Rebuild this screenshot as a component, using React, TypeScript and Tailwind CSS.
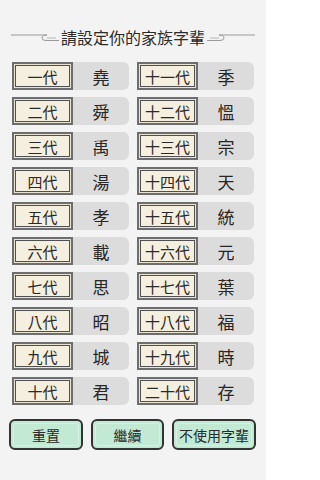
const rows: [string, string, string, string][] = [
  ['一代', '堯', '十一代', '季'],
  ['二代', '舜', '十二代', '慍'],
  ['三代', '禹', '十三代', '宗'],
  ['四代', '湯', '十四代', '天'],
  ['五代', '孝', '十五代', '統'],
  ['六代', '載', '十六代', '元'],
  ['七代', '思', '十七代', '葉'],
  ['八代', '昭', '十八代', '福'],
  ['九代', '城', '十九代', '時'],
  ['十代', '君', '二十代', '存'],
];

function Scroll({ flip }: { flip?: boolean }) {
  return (
    <svg width="48" height="10" viewBox="0 0 48 10" className={flip ? '-scale-x-100' : ''}>
      <path d="M0 3 H36 Q31 3 31 6 Q31 8.5 35 8.5 H48" fill="none" stroke="#9a9a9a" strokeWidth="1" />
      <path d="M36 6 H45" fill="none" stroke="#b5b5b5" strokeWidth="1" />
    </svg>
  );
}

function Entry({ gen, name }: { gen: string; name: string }) {
  return (
    <div className="flex h-[28px]">
      <div className="w-[61px] border-2 border-[#6e6e6e] bg-[#e9e3d4] p-[1px]">
        <div className="flex h-full items-center justify-center border-[1.5px] border-[#505050] bg-[#f5efdf] text-[15px] text-[#2a2a2a] leading-none">
          {gen}
        </div>
      </div>
      <div className="flex flex-1 items-center justify-center rounded-r-[6px] bg-[#dcdcdc] text-[17px] text-[#262626] leading-none">
        {name}
      </div>
    </div>
  );
}

function Button({ label, w }: { label: string; w: string }) {
  return (
    <button className={`${w} h-[31px] rounded-[6px] border-2 border-[#333] bg-[#c2e9d4] p-[2px]`}>
      <div className="flex h-full items-center justify-center rounded-[3px] border border-[#d6f1e3] text-[14px] text-[#2a2a2a] leading-none">
        {label}
      </div>
    </button>
  );
}

export default function App() {
  return (
    <div
      className="h-[480px] w-[266px] overflow-hidden bg-[#f3f3f3]"
      style={{ fontFamily: '"Noto Sans CJK TC", "Noto Sans CJK SC", sans-serif' }}
    >
      <div className="flex items-center justify-center gap-[2px] px-[10px] pt-[27px]">
        <Scroll />
        <div className="text-[16px] text-[#2a2a2a] leading-[20px]">請設定你的家族字輩</div>
        <Scroll flip />
      </div>
      <div className="mt-[15px] grid grid-cols-2 gap-x-2 gap-y-[7px] px-[12px]">
        {rows.map(r => (
          <div key={r[0]} className="contents">
            <Entry gen={r[0]} name={r[1]} />
            <Entry gen={r[2]} name={r[3]} />
          </div>
        ))}
      </div>
      <div className="mt-[14px] flex gap-2 px-[9px]">
        <Button label="重置" w="w-[74px]" />
        <Button label="繼續" w="w-[73px]" />
        <Button label="不使用字輩" w="w-[84px]" />
      </div>
    </div>
  );
}
